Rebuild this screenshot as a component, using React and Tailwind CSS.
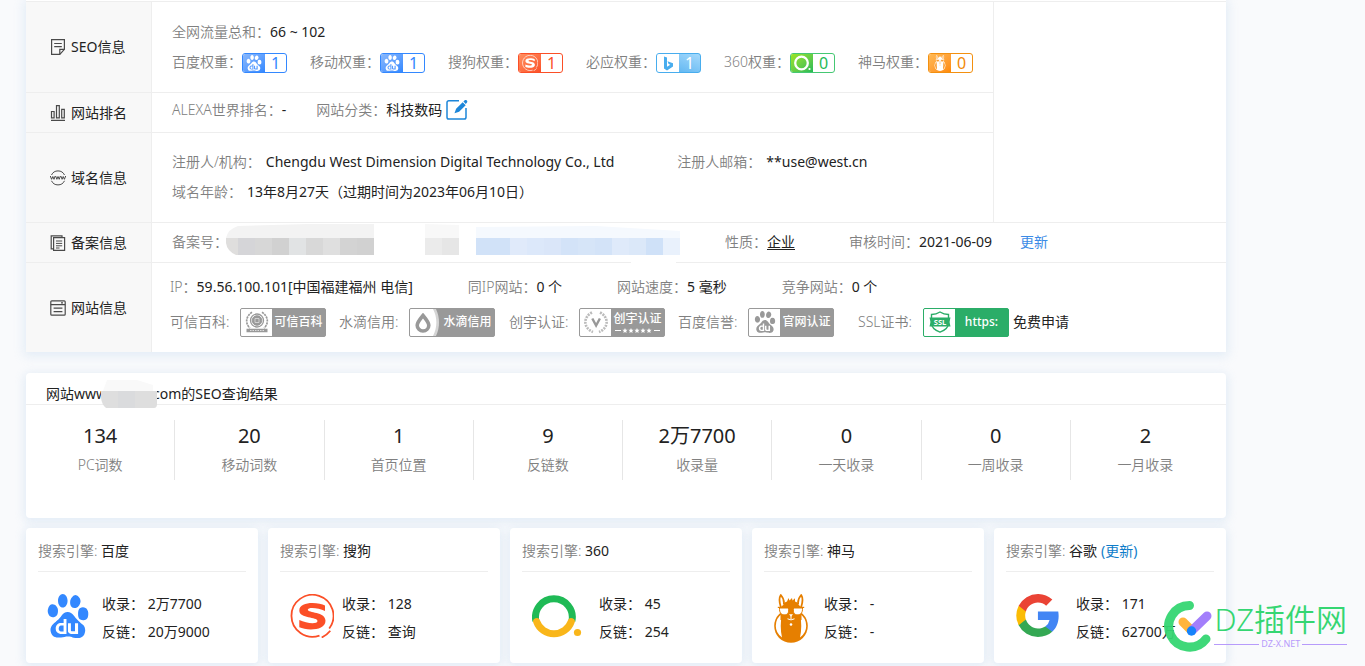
import React from "react";
import { SiBaidu } from "react-icons/si";

/* ---------- row heading icons ---------- */
const line = { fill: "none", stroke: "#4a4a4a", strokeWidth: 1.2 };

const NoteIcon = () => (
  <svg className="size-4 shrink-0" viewBox="0 0 16 16" {...line}>
    <path d="M1.6 .7h12.8v9.6l-4.6 5H1.6z" />
    <path d="M14.4 10.3H9.8v5M4.2 4.5h7.6M4.2 7.7h7.6" />
  </svg>
);
const BarsIcon = () => (
  <svg className="size-4 shrink-0" viewBox="0 0 16 16" {...line}>
    <path d="M1.500 6.500h2.600v6.300H1.500zM6.500 .7h2.800v12.100H6.500zM11.700 4.300h2.600v8.500h-2.600zM1 15.300h14" />
  </svg>
);
const WwwIcon = () => (
  <svg className="size-4 shrink-0" viewBox="0 0 16 16" {...line} strokeWidth="1">
    <path d="M1.500 5A7.200 7.200 0 0 1 14.500 5M1.500 10.800A7.200 7.200 0 0 0 14.500 10.800" />
    <path d="M.3 6l1.300 3.300L2.800 6.500 4 9.300 5.200 6M5.600 6l1.300 3.300L8 6.500l1.200 2.800L10.400 6M10.800 6l1.300 3.300 1.100-2.800 1.200 2.800L15.700 6" />
  </svg>
);
const PagesIcon = () => (
  <svg className="size-4 shrink-0" viewBox="0 0 16 16" {...line}>
    <path d="M3.600 2.700h11v12.600h-11zM3.600 13.800H1.200V.8H12v1.900" />
    <path d="M6 6h6.200M6 8.400h6.200M6 10.800h6.200M6 13h3.500" strokeWidth="1" />
  </svg>
);
const WindowIcon = () => (
  <svg className="size-4 shrink-0" viewBox="0 0 16 16" {...line}>
    <rect x=".8" y=".8" width="14.400" height="14.400" rx="1" />
    <path d="M.8 4.600h14.400M3.600 8.200h8.800M3.600 11.600h8.800M11 2.800h2" />
  </svg>
);
const EditIcon = () => (
  <svg className="h-[21px] w-[22px]" viewBox="0 0 22 21">
    <path d="M13 1.700H2.800a1.800 1.800 0 0 0-1.800 1.800v14.700a1.800 1.800 0 0 0 1.800 1.800h15.400a1.800 1.800 0 0 0 1.800-1.800V9" fill="none" stroke="#1c86d9" strokeWidth="1.500" />
    <path d="M8.500 14.300l1.600-4.600 6.600-6.400 3 3-6.600 6.500zM17.400 2.600l1.300-1.300c.6-.6 1.300-.5 1.900 0l.4.500c.5.600.5 1.200 0 1.800l-1.200 1.500z" fill="#1c86d9" />
  </svg>
);

/* ---------- brand marks ---------- */
const SogouMark = ({ className, color }) => (
  <svg className={className} viewBox="0 0 44 44">
    <path d="M39.200 34.500A21 21 0 1 0 29.500 41.600" fill="none" stroke={color} strokeWidth="1.800" />
    <path d="M40.300 36.800q-3.300 4.200-8.600 6.700" fill="none" stroke={color} strokeWidth="1.800" />
    <path d="M35 11.500C29 8.300 9.300 6.800 9.300 16.500 9.300 25 27.500 22.500 27.500 27c0 3.500-11 2.600-18.200-1v7.300c7.400 3.400 26.200 3.600 26.200-6.600 0-9.300-17.700-7.400-17.700-10.900 0-3.200 11-2 17.200 1.200z" fill={color} />
  </svg>
);
const LlamaMark = ({ className, body, face }) => (
  <svg className={className} viewBox="0 0 34 49">
    <ellipse cx="17" cy="32" rx="16.800" ry="16.800" fill={body} />
    <path d="M8 20Q1.800 24 1.800 32 1.800 39 8 43.500 5.500 32 8 20zM26 20q6.200 4 6.200 12 0 7-6.200 11.500 2.500-11.500 0-23.500z" fill={face} />
    <path d="M6.500 26V14Q8 9 13 7.500L14.500 4l1 2.500L18 4l.5 2.500L21 4.200V7.500Q26 9 27.500 14v12z" fill={body} />
    <path d="M6.800 13Q4.200 5 6.800 1 10.500 5 9.800 10.500M27.200 13q2.600-8 0-12-3.700 4-3 9.500" fill={face} stroke={body} strokeWidth="1.800" strokeLinejoin="round" />
    <path d="M5.500 14h9c.8 5-1 6.800-4 6.800S5.200 19 5.500 14zM19.500 14h9c.3 5-2 6.800-5 6.800s-4.800-1.800-4-6.800z" fill={face} stroke={body} strokeWidth="1" />
    <path d="M3.800 13.400h26.400" stroke={body} strokeWidth="1.200" />
    <path d="M15 20.200h4l-2 2.600z" fill={face} />
    <path d="M17 22v3M13.500 24.800q3.500 2.200 7 0" stroke={face} strokeWidth="1" fill="none" />
    <circle cx="17" cy="30.500" r="1.300" fill={face} />
  </svg>
);
const GoogleMark = () => (
  <svg className="size-[43px]" viewBox="0 0 24 24">
    <path fill="#4285f4" d="M23.800 12.270c0-.85-.08-1.670-.22-2.450H12.240v4.640h6.480a5.540 5.540 0 0 1-2.400 3.630v3h3.890c2.270-2.090 3.590-5.170 3.590-8.820z" />
    <path fill="#34a853" d="M12.240 24c3.240 0 5.960-1.070 7.960-2.910l-3.890-3c-1.080.72-2.450 1.150-4.070 1.150-3.130 0-5.780-2.110-6.730-4.960H1.500v3.100A12 12 0 0 0 12.240 24z" />
    <path fill="#fbbc05" d="M5.510 14.280a7.200 7.200 0 0 1 0-4.560v-3.100H1.500a12 12 0 0 0 0 10.760z" />
    <path fill="#ea4335" d="M12.240 4.760c1.760 0 3.350.61 4.590 1.800l3.450-3.440A11.600 11.600 0 0 0 12.240 0 12 12 0 0 0 1.500 6.620l4.010 3.100c.95-2.850 3.600-4.960 6.730-4.960z" />
  </svg>
);
const So360Mark = () => (
  <svg className="h-[44px] w-[50px]" viewBox="0 0 50 44" fill="none" strokeWidth="7">
    <path d="M3.900 27A18.400 18.400 0 1 1 39.900 27" stroke="#1fba56" />
    <path d="M4.600 27.500A18.400 18.400 0 0 0 39.300 27.500" stroke="#f9b61a" strokeLinecap="round" />
    <circle cx="45.500" cy="38.500" r="3.600" fill="#f9b61a" />
  </svg>
);
const So360Small = () => (
  <svg className="size-[18px]" viewBox="0 0 18 18">
    <circle cx="8.500" cy="9" r="6.300" fill="none" stroke="#fff" strokeWidth="2.300" />
    <circle cx="16.500" cy="15" r="1.100" fill="#fff" />
  </svg>
);
const BingMark = () => (
  <svg className="h-[15px] w-[11px]" viewBox="0 0 11 15">
    <path d="M1 .5l3 1v9.300l3.300-2-1.700-.8L4.500 5.300 10 7.200v3.300L4 14.500l-3-2z" fill="#48adee" />
  </svg>
);

/* ---------- weight badges ---------- */
const weights = [
  { label: "百度权重：", box: "border-[#3388ff] text-[#3388ff]", tile: "bg-linear-to-br from-[#8ab8fb] to-[#3388ff] text-white", icon: <SiBaidu className="size-4" />, value: "1" },
  { label: "移动权重：", box: "border-[#3388ff] text-[#3388ff]", tile: "bg-linear-to-br from-[#8ab8fb] to-[#3388ff] text-white", icon: <SiBaidu className="size-4" />, value: "1" },
  { label: "搜狗权重：", box: "border-[#fb4f27] text-[#fb4f27]", tile: "bg-linear-to-br from-[#ff8f5f] to-[#fb4f27]", icon: <SogouMark className="size-4" color="#fff" />, value: "1" },
  { label: "必应权重：", box: "border-[#48adee] text-white bg-linear-to-bl from-[#a4d9fc] to-[#48adee]", tile: "bg-white", icon: <BingMark />, value: "1" },
  { label: "360权重：", box: "border-[#45c873] text-[#1fba56]", tile: "bg-linear-to-br from-[#9be51d] to-[#1fba56]", icon: <So360Small />, value: "0" },
  { label: "神马权重：", box: "border-[#f39010] text-[#f28a05]", tile: "bg-linear-to-br from-[#ffba55] to-[#ff8a00]", icon: <LlamaMark className="h-4 w-3" body="#fff" face="#fa9a2a" />, value: "0" },
];

const WeightBadge = ({ box, tile, icon, value }) => (
  <span className={`mt-0.5 flex h-5 w-[45px] overflow-hidden rounded-[3px] border ${box}`}>
    <span className={`flex w-[22px] items-center justify-center ${tile}`}>{icon}</span>
    <span className="flex-1 text-center text-base leading-[19px]">{value}</span>
  </span>
);

/* ---------- certification badges ---------- */
const SealIcon = () => (
  <svg className="size-6" viewBox="0 0 24 24" fill="none" stroke="#999">
    <circle cx="12" cy="10.500" r="6.500" strokeWidth="1.300" />
    <circle cx="12" cy="10.500" r="4.800" fill="#999" />
    <path d="M10 8.500h4v4h-4z" stroke="#ddd" strokeWidth=".8" />
    <path d="M7 2.200C-.5 7 1 15 5 18M17 2.200C24.500 7 23 15 19 18" strokeWidth="1.700" strokeDasharray="2.200 .8" />
    <path d="M1.500 20.500h21" strokeWidth="3.500" />
    <path d="M5 20.500h14" stroke="#ddd" strokeWidth="1" strokeDasharray="1.500 1" />
  </svg>
);
const DropIcon = () => (
  <svg className="h-[27px] w-[31px]" viewBox="0 0 31 27">
    <path d="M25 0C29.500 8 29.500 19 25 27H31V0z" fill="#999" />
    <path d="M23 0c4.500 8 4.500 19 0 27h3c4-8 4-19 0-27z" fill="#d5d5d5" />
    <path d="M13 6.500c4 4.800 5.800 7.200 5.800 9.700a5.800 5.800 0 0 1-11.600 0c0-2.500 1.800-4.900 5.800-9.700z" fill="none" stroke="#999" strokeWidth="3.600" />
  </svg>
);
const LaurelIcon = () => (
  <svg className="size-6" viewBox="0 0 24 24" fill="none" stroke="#999">
    <path d="M8 2.500C-1 7-1 18 9 22M16 2.500C25 7 25 18 15 22" strokeWidth="2.600" strokeDasharray="2 1" stroke="#bbb" />
    <path d="M8.300 8.500l3.800 7 3.800-7" strokeWidth="2.400" />
  </svg>
);
const ShieldIcon = () => (
  <svg className="size-[22px]" viewBox="0 0 22 22">
    <path d="M11 1c3 2 5.500 2.500 8.500 2.500V12c0 4.500-4 7.500-8.500 9.200C6.500 19.500 2.500 16.500 2.500 12V3.500C5.500 3.500 8 3 11 1z" fill="none" stroke="#2bad68" strokeWidth="1.400" />
    <path d="M.5 6.500h21l-1 4.500 1 4.500H.5l1-4.500z" fill="#2bad68" />
    <text x="11" y="13.600" textAnchor="middle" fontSize="7.500" fontWeight="700" fill="#fff" fontFamily="Open Sans, sans-serif">SSL</text>
  </svg>
);

const CertBadge = ({ icon, tone = "border-[#999] bg-[#999]", children }) => (
  <span className={`flex h-[29px] w-[86px] overflow-hidden rounded-xs border text-xs font-medium text-white ${tone}`}>
    <span className="flex w-[31px] shrink-0 items-center justify-center bg-white">{icon}</span>
    <span className="flex flex-1 flex-col items-center justify-center leading-4">{children}</span>
  </span>
);

const Stars = () => (
  <svg className="h-[7px] w-[45px]" viewBox="0 0 45 7" fill="#fff">
    <path d="M0 3h6v1H0zM39 3h6v1h-6z" />
    {[10, 16, 22, 28, 34].map((x) => (
      <path key={x} transform={`translate(${x} 3.500)`} d="M0-2.600L.8-.8l1.800.1L1.200.5l.4 1.900L0 1.400l-1.600 1L-1.200.5-2.600-.7l1.800-.1z" />
    ))}
  </svg>
);

/* ---------- obscured values ---------- */
const greys = ["#d5d5d8", "#d7d7d7", "#d1d1d1", "#e1e3e4", "#d8d8d8", "#dfdfdf", "#d3d3d3", "#d1d1d1"];
const blues = ["#d1e2f8", "#d1e2f8", "#e0eafa", "#dce8fa", "#dae6f9", "#d3e3f8", "#d6e5f8", "#d3e3f8", "#dfeafa", "#dbe8f9", "#cfe1f8", "#e9f1fc"];
const RecordMosaic = () => (
  <svg className="h-[30px] w-[497px] overflow-visible" viewBox="0 0 497 30">
    <path d="M10-1Q0 2-2 11H146V-3H80z" fill="#f3f3f3" />
    <path d="M-2 11H10V28H8Q-1 24-2 16z" fill="#dfdedd" />
    {greys.map((c, i) => <rect key={i} x={10 + i * 17} y="11" width="17" height="17" fill={c} />)}
    <path d="M197-3l34 1v13h-34z" fill="#f8f8f8" />
    <path d="M197 11h17v17h-17z" fill="#ebebeb" />
    <path d="M214 11h17v17h-17z" fill="#e6e6e6" />
    <path d="M248 0l120-1 84 5v7H248z" fill="#f5f9fe" />
    {blues.map((c, i) => <rect key={i} x={248 + i * 17} y="11" width="17" height="17" fill={c} />)}
    <path d="M403 33h45v4h-45z" fill="#fff" />
  </svg>
);

/* ---------- small building blocks ---------- */
const Label = ({ children, className = "" }) => <span className={`font-[350] text-[#808080] ${className}`}>{children}</span>;

const RowHead = ({ icon, children }) => (
  <th scope="row" className="w-[125px] border-t border-[#eee] bg-[#f8f8f8] p-0 font-normal">
    <span className="flex items-center gap-[5px] pl-6">{icon}{children}</span>
  </th>
);
const cell = "border-t border-l border-[#eee] text-left align-top";
const lineCls = "flex h-[30px] items-center whitespace-nowrap";

const stats = [
  ["134", "PC词数"], ["20", "移动词数"], ["1", "首页位置"], ["9", "反链数"],
  ["2万7700", "收录量"], ["0", "一天收录"], ["0", "一周收录"], ["2", "一月收录"],
];

const engines = [
  { name: "百度", w: "w-[54px]", icon: <SiBaidu className="size-[44px] -ml-0.5 text-[#3388ff]" />, a: "2万7700", b: "20万9000" },
  { name: "搜狗", w: "w-[52px]", icon: <SogouMark className="size-[44px]" color="#fb4f27" />, a: "128", b: "查询" },
  { name: "360", w: "w-[67px]", icon: <So360Mark />, a: "45", b: "254" },
  { name: "神马", w: "w-[50px]", icon: <LlamaMark className="h-[49px] w-[34px]" body="#e67f00" face="#fff" />, a: "-", b: "-" },
  { name: "谷歌", update: true, w: "w-[60px]", icon: <GoogleMark />, a: "171", b: "62700万" },
];

const shadow = "shadow-[0_2px_10px_2px_rgba(200,220,240,0.45)]";

export default function App() {
  return (
    <div className="relative min-h-screen overflow-hidden bg-[#f9fafc] pl-[26px] font-['Noto_Sans','Noto_Sans_CJK_SC',sans-serif] text-sm text-[#222]">
      <main className="flex max-w-[1200px] flex-col">
        <section className={`bg-white pt-px ${shadow}`}>
          <table className="w-full table-fixed border-separate border-spacing-0">
            <colgroup>
              <col className="w-[125px]" />
              <col />
              <col className="w-[233px]" />
            </colgroup>
            <tbody>
              <tr>
                <RowHead icon={<NoteIcon />}>SEO信息</RowHead>
                <td className={`${cell} py-[15px] pl-5`}>
                  <div className={lineCls}><Label>全网流量总和：</Label>66 ~ 102</div>
                  <div className={`${lineCls} gap-[23px]`}>
                    {weights.map((w) => (
                      <span key={w.label} className="flex items-center"><Label>{w.label}</Label><WeightBadge {...w} /></span>
                    ))}
                  </div>
                </td>
                <td rowSpan={3} className={cell} />
              </tr>
              <tr>
                <RowHead icon={<BarsIcon />}>网站排名</RowHead>
                <td className={`${cell} pt-0.5 pb-[7px] pl-5`}>
                  <div className={lineCls}>
                    <Label>ALEXA世界排名：</Label>-
                    <Label className="ml-[30px]">网站分类：</Label>科技数码
                    <button type="button" aria-label="编辑分类" className="ml-1 pb-0.5"><EditIcon /></button>
                  </div>
                </td>
              </tr>
              <tr>
                <RowHead icon={<WwwIcon />}>域名信息</RowHead>
                <td className={`${cell} pt-[14px] pb-[15px] pl-5`}>
                  <div className={lineCls}>
                    <Label className="mr-[5px]">注册人/机构：</Label>Chengdu West Dimension Digital Technology Co., Ltd
                    <Label className="mr-[5px] ml-[63px]">注册人邮箱：</Label>**use@west.cn
                  </div>
                  <div className={lineCls}><Label className="mr-[5px]">域名年龄：</Label>13年8月27天（过期时间为2023年06月10日）</div>
                </td>
              </tr>
              <tr>
                <RowHead icon={<PagesIcon />}>备案信息</RowHead>
                <td colSpan={2} className={`${cell} pt-1 pb-[5px] pl-5`}>
                  <div className={lineCls}>
                    <Label>备案号：</Label><RecordMosaic />
                    <Label>性质：</Label><span className="underline underline-offset-2">企业</span>
                    <Label className="ml-[54px]">审核时间：</Label>2021-06-09
                    <a href="#update" className="ml-7 text-[#3b8be6]">更新</a>
                  </div>
                </td>
              </tr>
              <tr>
                <RowHead icon={<WindowIcon />}>网站信息</RowHead>
                <td colSpan={2} className={`${cell} pt-[9px] pb-[15px] pl-[18px]`}>
                  <div className={`${lineCls} mb-[5px] gap-[55px]`}>
                    <span><Label>IP：</Label>59.56.100.101[中国福建福州 电信]</span>
                    <span><Label>同IP网站：</Label>0 个</span>
                    <span><Label>网站速度：</Label>5 毫秒</span>
                    <span><Label>竞争网站：</Label>0 个</span>
                  </div>
                  <div className={lineCls}>
                    <Label className="w-[70px]">可信百科:</Label>
                    <CertBadge icon={<SealIcon />}>可信百科</CertBadge>
                    <Label className="ml-[13px] w-[70px]">水滴信用:</Label>
                    <CertBadge icon={<DropIcon />}>水滴信用</CertBadge>
                    <Label className="ml-[14px] w-[70px]">创宇认证:</Label>
                    <CertBadge icon={<LaurelIcon />}>创宇认证<Stars /></CertBadge>
                    <Label className="ml-[13px] w-[70px]">百度信誉:</Label>
                    <CertBadge icon={<SiBaidu className="size-[22px] text-[#999]" />}>官网认证</CertBadge>
                    <Label className="ml-6 w-[65px]">SSL证书:</Label>
                    <CertBadge icon={<ShieldIcon />} tone="border-[#2bad68] bg-[#2bad68]">https:</CertBadge>
                    <a href="#apply" className="ml-1">免费申请</a>
                  </div>
                </td>
              </tr>
            </tbody>
          </table>
        </section>

        <section className={`mt-[21px] rounded bg-white pb-[38px] ${shadow}`}>
          <h2 className="relative flex border-b border-[#eee] pt-[11px] pl-5 leading-5">
            网站www
            <span className="relative w-[46px]">
              <svg className="absolute -top-1 -left-1.5 h-7 w-14" viewBox="0 0 56 28">
                <path d="M6 0l10-3 20 3 16 5v6H2z" fill="#f9f9f9" />
                <path d="M0 11h56v13q0 4-3 4H5q-4-3-5-10z" fill="#dedede" />
                <path d="M17 11h17v17H17z" fill="#dadbdd" />
              </svg>
            </span>
            com的SEO查询结果
          </h2>
          <dl className="grid grid-cols-8 pt-[15px] pr-[6px]">
            {stats.map(([value, label], i) => (
              <div key={i} className="border-r border-[#e6e6e6] text-center last:border-r-0">
                <div className="flex flex-col-reverse pb-0.5">
                  <dt className="leading-[26px]"><Label>{label}</Label></dt>
                  <dd className="text-xl leading-8">{value}</dd>
                </div>
              </div>
            ))}
          </dl>
        </section>

        <section className="mt-[10px] grid grid-cols-5 gap-[10px]">
          {engines.map((e) => (
            <article key={e.name} className={`rounded bg-white px-3 pb-[17px] ${shadow}`}>
              <h3 className="border-b border-[#eee] pt-[9px] pb-1.5 leading-7">
                <Label>搜索引擎:</Label> {e.name}
                {e.update && <a href="#google" className="ml-1 text-[#0e7cc9]">(更新)</a>}
              </h3>
              <div className="flex pt-[18px] pl-[10px]">
                <div className={`shrink-0 pt-1 ${e.w}`}>{e.icon}</div>
                <div className="leading-7 whitespace-nowrap">
                  <p>收录： {e.a}</p>
                  <p>反链： {e.b}</p>
                </div>
              </div>
            </article>
          ))}
        </section>
      </main>

      <div className="absolute right-[18px] bottom-3.5 flex items-center gap-0.5">
        <svg className="h-[52px] w-12" viewBox="0 0 48 52" fill="none" strokeLinecap="round">
          <path d="M25.500 5.500A20.800 20.800 0 1 0 42 39" stroke="#35d672" strokeWidth="9" opacity=".95" />
          <path d="M19 22l8.500 8.500" stroke="#ffb53c" strokeWidth="9" />
          <path d="M28 30.500L43 16" stroke="#a37ffb" strokeWidth="9" />
          <circle cx="27.500" cy="31" r="4.700" fill="#1683fb" />
        </svg>
        <div className="flex flex-col">
          <span className="text-[31px] leading-8 font-[350] whitespace-nowrap text-[#35d672]">DZ插件网</span>
          <span className="flex items-center gap-0.5 pt-1 text-[9px] leading-[10px] text-[#b79bfb]">
            <i className="h-px flex-1 bg-[#b79bfb]" />DZ-X.NET<i className="h-px flex-1 bg-[#b79bfb]" />
          </span>
        </div>
      </div>
    </div>
  );
}
